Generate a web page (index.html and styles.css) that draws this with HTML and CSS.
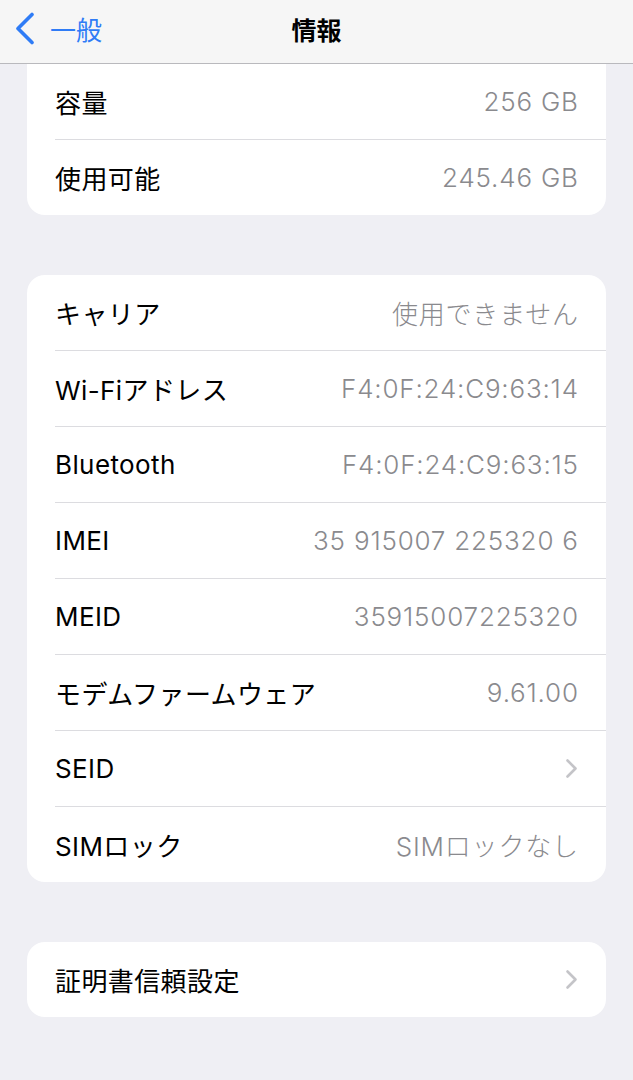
FILE: index.html
```html
<!DOCTYPE html>
<html lang="ja">
<head>
  <meta charset="UTF-8" />
  <meta name="viewport" content="width=device-width, initial-scale=1" />
  <title>情報</title>
  <link rel="stylesheet" href="styles.css">
</head>
<body>
  <div class="nav">
    <div class="back">
      <svg width="22" height="33" viewBox="0 0 22 33"><path d="M18 2.5 L4 16.5 L18 30.5" fill="none" stroke="#2f7cf6" stroke-width="3.6" stroke-linecap="round" stroke-linejoin="round"/></svg>
      <span>一般</span>
    </div>
    <div class="title">情報</div>
    <div></div>
  </div>

  <div class="card scrolled">
    <div class="row"><span class="label">容量</span><span class="value">256 GB</span></div>
    <div class="row"><span class="label">使用可能</span><span class="value">245.46 GB</span></div>
  </div>

  <div class="card">
    <div class="row"><span class="label">キャリア</span><span class="value">使用できません</span></div>
    <div class="row"><span class="label">Wi-Fiアドレス</span><span class="value">F4:0F:24:C9:63:14</span></div>
    <div class="row"><span class="label">Bluetooth</span><span class="value">F4:0F:24:C9:63:15</span></div>
    <div class="row"><span class="label">IMEI</span><span class="value">35 915007 225320 6</span></div>
    <div class="row"><span class="label">MEID</span><span class="value">35915007225320</span></div>
    <div class="row"><span class="label">モデムファームウェア</span><span class="value">9.61.00</span></div>
    <div class="row"><span class="label">SEID</span><span class="chevron"><svg width="14" height="21" viewBox="0 0 14 21"><path d="M2.5 2.5 L10.5 10.5 L2.5 18.5" fill="none" stroke="#c4c4c8" stroke-width="2.6" stroke-linecap="round" stroke-linejoin="round"/></svg></span></div>
    <div class="row"><span class="label">SIMロック</span><span class="value">SIMロックなし</span></div>
  </div>

  <div class="card">
    <div class="row"><span class="label">証明書信頼設定</span><span class="chevron"><svg width="14" height="21" viewBox="0 0 14 21"><path d="M2.5 2.5 L10.5 10.5 L2.5 18.5" fill="none" stroke="#c4c4c8" stroke-width="2.6" stroke-linecap="round" stroke-linejoin="round"/></svg></span></div>
  </div>
</body>
</html>
```

FILE: styles.css
```css
body { margin: 0; background: #efeff4; font-family: Inter, "Noto Sans CJK JP", sans-serif; color: #000; }

.nav { height: 64px; border-bottom: 1px solid #b9b9bd; background: #f6f6f6; display: grid; grid-template-columns: 1fr auto 1fr; align-items: center; padding: 0 0 6px 0; box-sizing: border-box; }
.back { display: flex; align-items: center; gap: 14px; padding-left: 14px; color: #2f7cf6; font-size: 26px; }
.title { font-size: 25px; font-weight: bold; }

.card { margin: 60px 27px 0; background: #fff; border-radius: 18px; }
.card.scrolled { margin-top: 0; border-radius: 0 0 18px 18px; }

.row { height: 75px; margin-left: 28px; padding-right: 28px; display: flex; align-items: center; justify-content: space-between; border-bottom: 1px solid #dcdce0; font-size: 26px; letter-spacing: 0.4px; }
.row:last-child { border-bottom: none; }
.value { color: #8a8a8e; font-weight: 300; letter-spacing: 0.8px; margin-right: -0.8px; }
.chevron { display: flex; margin-right: -1px; }
```
